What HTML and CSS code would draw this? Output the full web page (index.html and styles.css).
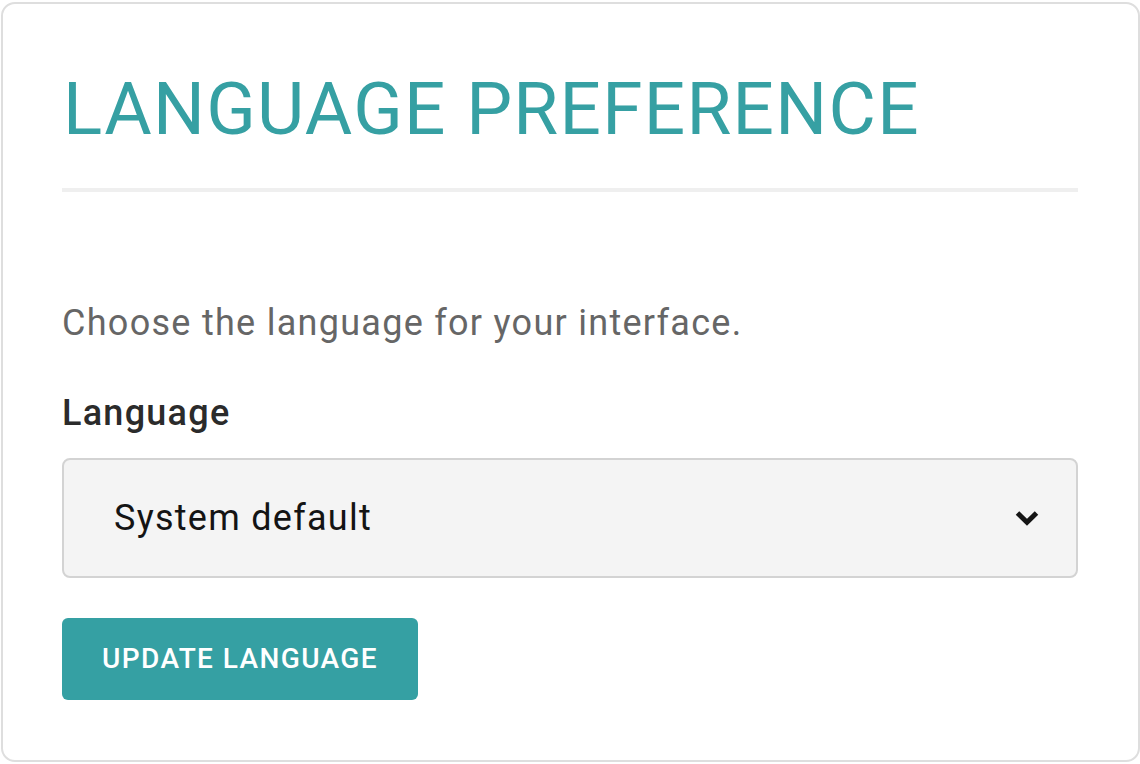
FILE: index.html
```html
<!DOCTYPE html>
<html lang="en">
<head>
<meta charset="utf-8">
<title>Language preference</title>
<link rel="stylesheet" href="styles.css">
</head>
<body>
<section class="card">
  <h1 class="card-title">LANGUAGE PREFERENCE</h1>
  <p class="card-text">Choose the language for your interface.</p>
  <label class="field-label" for="lang">Language</label>
  <div class="select" id="lang" role="combobox" aria-expanded="false" tabindex="0">
    <span class="select-value">System default</span>
    <svg class="select-chevron" width="26" height="18" viewBox="0 0 26 18" aria-hidden="true">
      <polyline points="3.5,4 13,13.2 22.5,4" fill="none" stroke="#151515" stroke-width="5" stroke-linecap="butt" stroke-linejoin="miter"/>
    </svg>
  </div>
  <button class="btn" type="button">UPDATE LANGUAGE</button>
</section>
</body>
</html>
```

FILE: styles.css
```css
html, body {
  margin: 0;
  padding: 0;
  background: #ffffff;
}

body {
  font-family: Roboto, "Liberation Sans", Arial, sans-serif;
}

.card {
  margin: 2px 0 1px 1px;
  border: 2px solid #dedede;
  border-radius: 14px;
  padding: 61px 60px 60px 59px;
  display: flex;
  flex-direction: column;
  align-items: flex-start;
  background: #ffffff;
}

.card-title {
  align-self: stretch;
  margin: 0;
  padding: 0 0 35px 1px;
  border-bottom: 4px solid #efefef;
  font-size: 72.8px;
  line-height: 88px;
  font-weight: 400;
  color: #36a0a3;
  letter-spacing: 1.3px;
}

.card-text {
  margin: 104px 0 0 0;
  font-size: 36px;
  line-height: 54px;
  color: #666666;
  letter-spacing: 1.28px;
}

.field-label {
  margin-top: 36px;
  font-size: 36px;
  line-height: 54px;
  font-weight: 500;
  color: #2b2b2b;
  letter-spacing: 1.25px;
}

.select {
  align-self: stretch;
  margin-top: 18px;
  height: 116px;
  box-sizing: content-box;
  border: 2px solid #d3d3d3;
  border-radius: 8px;
  background: #f4f4f4;
  display: flex;
  align-items: center;
  justify-content: space-between;
  padding: 0 36px 0 50px;
}

.select-value {
  font-size: 36px;
  color: #141414;
  letter-spacing: 1.27px;
}

.select-chevron {
  display: block;
}

.btn {
  margin-top: 40px;
  height: 82px;
  padding: 0 40px 2px;
  border: 0;
  border-radius: 6px;
  background: #35a0a3;
  color: #ffffff;
  font-family: Roboto, "Liberation Sans", Arial, sans-serif;
  font-size: 28px;
  font-weight: 500;
  letter-spacing: 1.4px;
}
```
